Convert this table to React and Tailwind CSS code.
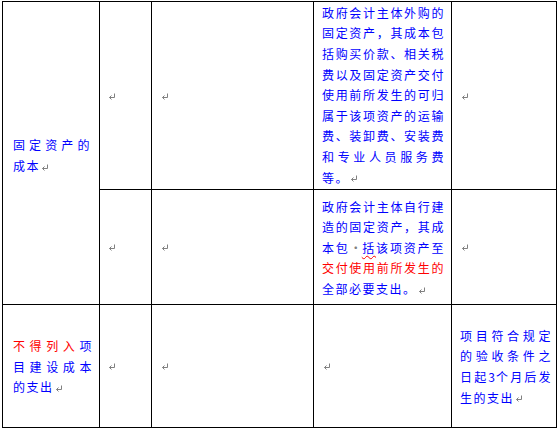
const Mark = () => (
    <svg className="inline-block align-middle ml-[1px]" width="8" height="8" viewBox="0 0 8 8">
        <path d="M6.5 0.5 V4.5 H1.5" fill="none" stroke="#808080" strokeWidth="1" />
        <path d="M3.5 2.5 L1.5 4.5 L3.5 6.5" fill="none" stroke="#808080" strokeWidth="1" />
    </svg>
);

const Empty = ({ pl = "pl-[7px]" }) => (
    <td className={"border border-black align-middle " + pl}>
        <Mark />
    </td>
);

const Blue = ({ children }) => <span className="text-[#0000ff]">{children}</span>;
const Red = ({ children }) => <span className="text-[#ff0000]">{children}</span>;

const App = () => {
    return (
        <div className="w-[559px] h-[430px] bg-white pt-[1px] pl-[2px] font-['Noto_Sans_CJK_SC',sans-serif] text-[12px] leading-[20.6px] tracking-[1.5px]">
            <table className="border-collapse table-fixed w-[555px]">
                <colgroup>
                    <col className="w-[97px]" />
                    <col className="w-[52px]" />
                    <col className="w-[162px]" />
                    <col className="w-[138px]" />
                    <col className="w-[105px]" />
                </colgroup>
                <tbody>
                    <tr className="h-[188px]">
                        <td rowSpan={2} className="border border-black align-middle pl-[10px] pr-[8px] text-justify pt-[6px]">
                            <Blue>固定资产的成本</Blue><Mark />
                        </td>
                        <Empty />
                        <Empty pl="pl-[8px]" />
                        <td className="border border-black align-middle pl-[8px] pr-[6px] text-justify">
                            <Blue>政府会计主体外购的固定资产，其成本包括购买价款、相关税费以及固定资产交付使用前所发生的可归属于该项资产的运输费、装卸费、安装费和专业人员服务费等。</Blue><Mark />
                        </td>
                        <Empty pl="pl-[8px]" />
                    </tr>
                    <tr className="h-[115px]">
                        <Empty />
                        <Empty pl="pl-[8px]" />
                        <td className="border border-black align-middle pl-[8px] pr-[6px] text-justify pt-[2px]">
                            <Blue>政府会计主体自行建造的固定资产，其成本包</Blue>
                            <span className="text-[#808080] tracking-normal">·</span>
                            <span className="text-[#0000ff] underline decoration-wavy decoration-[#ff0000] decoration-1 underline-offset-2">括</span>
                            <Blue>该项资产至</Blue>
                            <Red>交付使用前所发生的</Red>
                            <Blue>全部必要支出。</Blue><Mark />
                        </td>
                        <Empty pl="pl-[8px]" />
                    </tr>
                    <tr className="h-[123px]">
                        <td className="border border-black align-middle pl-[10px] pr-[6px] text-justify pt-[2px]">
                            <Red>不得列入</Red><Blue>项目建设成本的支出</Blue><Mark />
                        </td>
                        <Empty />
                        <Empty pl="pl-[8px]" />
                        <Empty pl="pl-[8px]" />
                        <td className="border border-black align-middle pl-[8px] pr-[4px] text-justify pt-[2px]">
                            <Blue>项目符合规定的验收条件之日起<span className="tracking-[0.5px]">3</span>个月后发生的支出</Blue><Mark />
                        </td>
                    </tr>
                </tbody>
            </table>
        </div>
    );
};

export default App;
